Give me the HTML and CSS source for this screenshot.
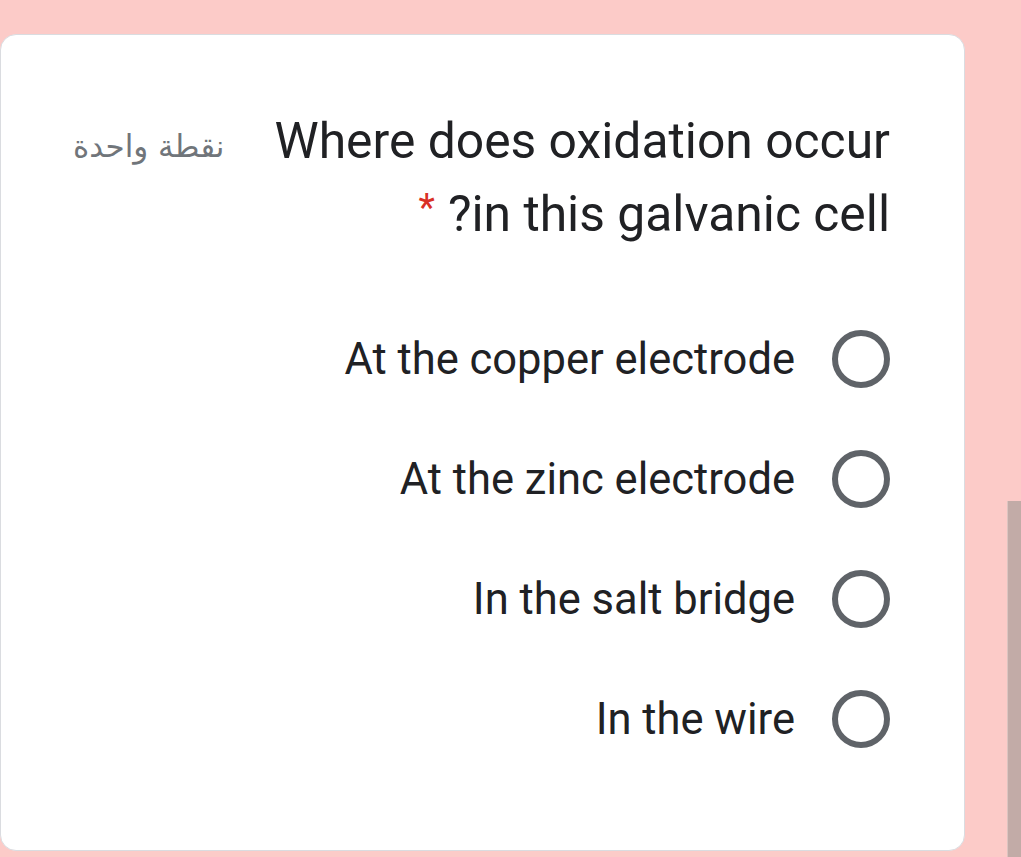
FILE: index.html
```html
<!DOCTYPE html>
<html lang="ar">
<head>
<meta charset="utf-8">
<title>Question</title>
<link rel="stylesheet" href="styles.css">
</head>
<body>
<div class="page">
  <div class="card" dir="rtl">
    <div class="header">
      <div class="question">Where does oxidation occur in this galvanic cell?<span class="req">*</span></div>
      <div class="points">نقطة واحدة</div>
    </div>
    <div class="options">
      <label class="option"><span class="radio"></span><span class="label" dir="ltr">At the copper electrode</span></label>
      <label class="option"><span class="radio"></span><span class="label" dir="ltr">At the zinc electrode</span></label>
      <label class="option"><span class="radio"></span><span class="label" dir="ltr">In the salt bridge</span></label>
      <label class="option"><span class="radio"></span><span class="label" dir="ltr">In the wire</span></label>
    </div>
  </div>
  <div class="scrollbar"></div>
</div>
</body>
</html>
```
FILE: styles.css
```css
html, body {
  margin: 0;
  padding: 0;
  background: #fccbc8;
  height: 100%;
  overflow: hidden;
}
.page {
  position: relative;
  width: 1021px;
  height: 857px;
  padding-top: 34px;
  box-sizing: border-box;
}
.card {
  width: 965px;
  height: 817px;
  box-sizing: border-box;
  background: #ffffff;
  border: 1px solid #dadce0;
  border-radius: 16px;
  padding: 80px 74px 0 0;
  font-family: Roboto, "Liberation Sans", sans-serif;
}
.header {
  display: flex;
  justify-content: space-between;
  align-items: flex-start;
}
.question {
  width: 640px;
  font-size: 49.8px;
  line-height: 73px;
  color: #202124;
  margin-top: -10px;
}
.req {
  display: inline-block;
  color: #d93025;
  font-size: 38px;
  line-height: 38px;
  vertical-align: 10px;
  margin-right: 13px;
}
.points {
  font-family: "DejaVu Sans", "Noto Sans", sans-serif;
  font-size: 31px;
  color: #70757a;
  margin-left: 72px;
  margin-top: 13px;
}
.options {
  display: flex;
  flex-direction: column;
  gap: 60px;
  margin-top: 78px;
}
.option {
  display: flex;
  align-items: center;
  gap: 37px;
  height: 60px;
}
.radio {
  width: 58px;
  height: 58px;
  box-sizing: border-box;
  border: 6px solid #5f6368;
  border-radius: 50%;
  flex: none;
}
.label {
  font-size: 43.5px;
  color: #202124;
}
.scrollbar {
  position: absolute;
  right: 0;
  top: 501px;
  width: 13px;
  height: 356px;
  background: #c2aba7;
  border-left: 1px solid #dcc4c0;
}
```
